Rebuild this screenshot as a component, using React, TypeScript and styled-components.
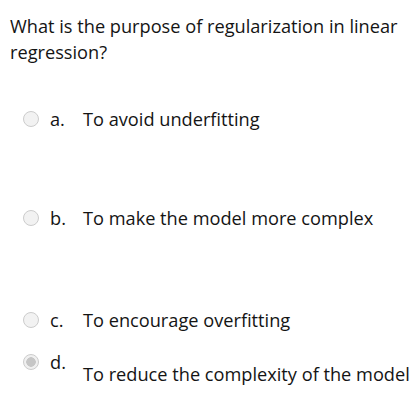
import styled, { createGlobalStyle } from "styled-components";

const GlobalStyle = createGlobalStyle`
  body {
    margin: 0;
    background: #ffffff;
    font-family: "Open Sans", "Noto Sans", sans-serif;
    color: #141414;
  }
`;

interface Option {
  letter: string;
  text: string;
  selected?: boolean;
  space: number;
  drop?: number;
}

const options: Option[] = [
  { letter: "a.", text: "To avoid underfitting", space: 77 },
  { letter: "b.", text: "To make the model more complex", space: 80 },
  { letter: "c.", text: "To encourage overfitting", space: 20 },
  { letter: "d.", text: "To reduce the complexity of the model", selected: true, space: 0, drop: 12 },
];

const App = () => {
  return (
    <Page>
      <GlobalStyle />
      <Question>What is the purpose of regularization in linear regression?</Question>
      <Answers>
        {options.map((o) => (
          <Row key={o.letter} $space={o.space}>
            <Radio $selected={!!o.selected} />
            <Letter>{o.letter}</Letter>
            <Text $drop={o.drop ?? 0}>{o.text}</Text>
          </Row>
        ))}
      </Answers>
    </Page>
  );
};

const Page = styled.div`
  padding: 13px 10px 0 10px;
`;

const Question = styled.div`
  font-size: 18.2px;
  line-height: 26px;
  margin-bottom: 43px;
`;

const Answers = styled.div`
  display: flex;
  flex-direction: column;
`;

const Row = styled.div<{ $space: number }>`
  display: flex;
  align-items: flex-start;
  padding-left: 13px;
  margin-bottom: ${(p) => p.$space}px;
  font-size: 18.2px;
  line-height: 22px;
`;

const Radio = styled.span<{ $selected: boolean }>`
  width: 16px;
  height: 16px;
  margin-top: 3px;
  border-radius: 50%;
  box-sizing: border-box;
  border: 1px solid #cccccc;
  background: ${(p) =>
    p.$selected
      ? "radial-gradient(circle, #c6c6c6 0 4.5px, #f0f0f0 5px)"
      : "#f2f2f2"};
  flex-shrink: 0;
`;

const Letter = styled.span`
  width: 33px;
  margin-left: 11px;
  flex-shrink: 0;
`;

const Text = styled.span<{ $drop: number }>`
  padding-top: ${(p) => p.$drop}px;
  white-space: nowrap;
`;

export default App;
